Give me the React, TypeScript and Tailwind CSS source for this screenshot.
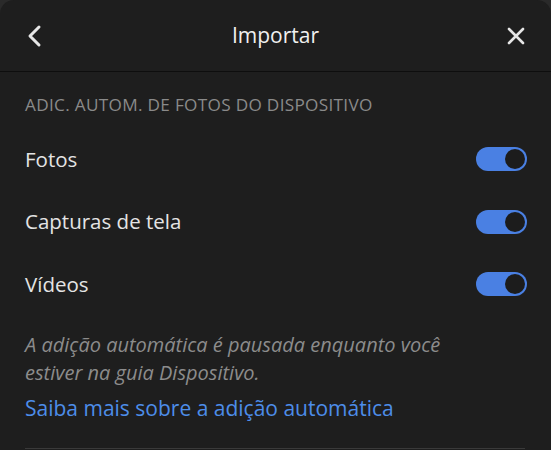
import React from "react";

interface ToggleRowProps {
  label: string;
  checked: boolean;
}

function Toggle({ checked }: { checked: boolean }) {
  return (
    <div
      className={`flex h-[24px] w-[51px] items-center rounded-full px-[2px] ${
        checked ? "justify-end bg-[#4a80e3]" : "justify-start bg-[#4a4a4a]"
      }`}
    >
      <div className="h-[20px] w-[20px] rounded-full bg-[#1c1c1c]" />
    </div>
  );
}

function ToggleRow({ label, checked }: ToggleRowProps) {
  return (
    <div className="flex h-[62.5px] items-center justify-between pr-[24px]">
      <span className="text-[20.5px] text-[#e4e4e4]">{label}</span>
      <Toggle checked={checked} />
    </div>
  );
}

export default function App() {
  const rows = [
    { label: "Fotos", checked: true },
    { label: "Capturas de tela", checked: true },
    { label: "Vídeos", checked: true },
  ];

  return (
    <div
      className="h-[450px] w-[551px] overflow-hidden bg-[#2a2a2a]"
      style={{ fontFamily: '"Open Sans", "Noto Sans", sans-serif' }}
    >
      <div className="h-full rounded-t-[14px] bg-[#1e1e1e]">
        {/* header */}
        <div className="flex h-[72px] items-center justify-between border-b border-[#0e0e0e] px-[24px]">
          <svg width="22" height="24" viewBox="0 0 22 24" className="text-[#e6e6e6]">
            <path
              d="M15 3 L6 12 L15 21"
              fill="none"
              stroke="currentColor"
              strokeWidth="3"
              strokeLinecap="round"
              strokeLinejoin="round"
            />
          </svg>
          <span className="text-[21px] text-[#f0f0f0]">Importar</span>
          <svg width="22" height="22" viewBox="0 0 22 22" className="text-[#e6e6e6]">
            <path
              d="M4 4 L18 18 M18 4 L4 18"
              fill="none"
              stroke="currentColor"
              strokeWidth="2.6"
              strokeLinecap="round"
            />
          </svg>
        </div>

        <div className="pl-[25px]">
          <div className="pt-[21px] text-[17.2px] leading-[24px] tracking-[0.3px] text-[#8a8a8a]">
            ADIC. AUTOM. DE FOTOS DO DISPOSITIVO
          </div>
          <div className="mt-[11px]">
            {rows.map((r) => (
              <ToggleRow key={r.label} label={r.label} checked={r.checked} />
            ))}
          </div>
          <p className="mt-[15px] pr-[90px] text-[20px] italic leading-[28px] text-[#8c8c8c]">
            A adição automática é pausada enquanto você estiver na guia Dispositivo.
          </p>
          <a className="mt-[6px] block text-[21px] text-[#4d8de9]">
            Saiba mais sobre a adição automática
          </a>
          <div className="mr-[26px] mt-[24px] border-b border-[#3a3a3a]" />
        </div>
      </div>
    </div>
  );
}
